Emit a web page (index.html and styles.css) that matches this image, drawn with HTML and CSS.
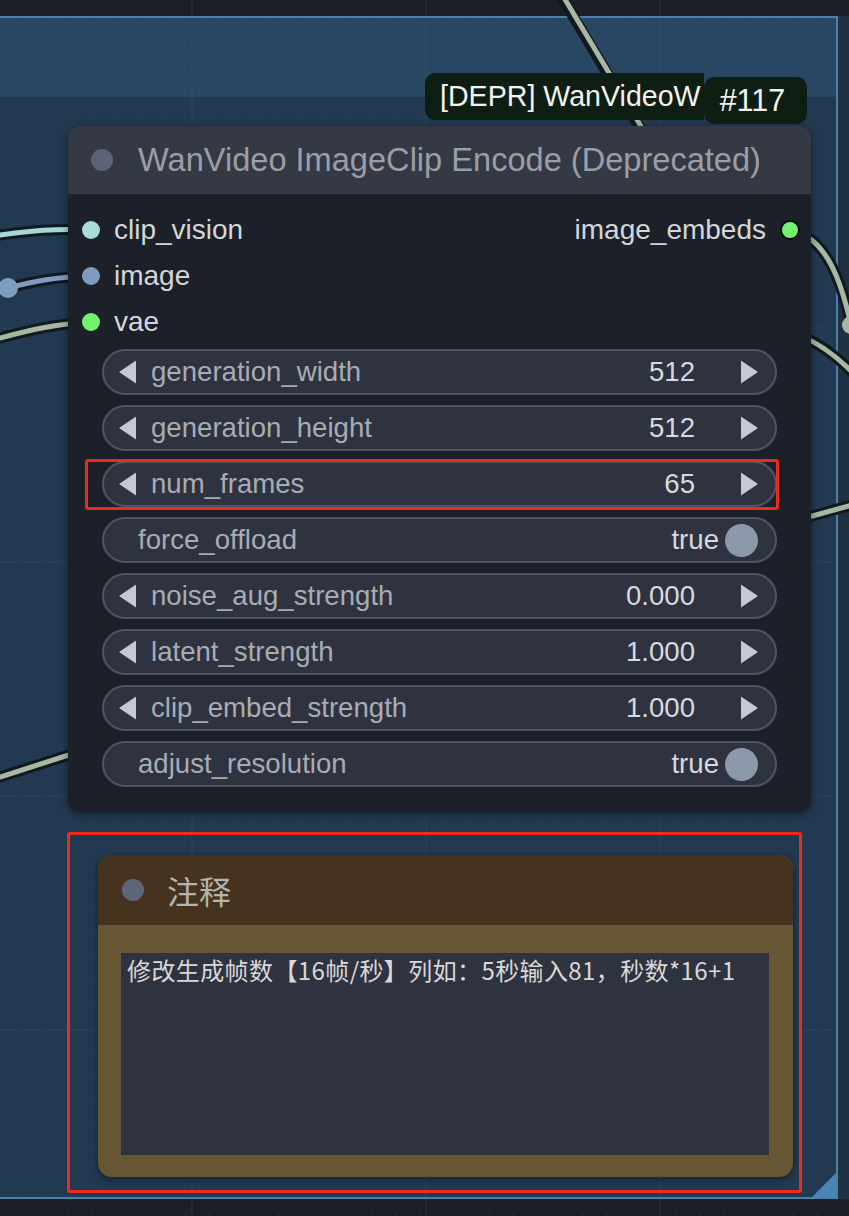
FILE: index.html
```html
<!DOCTYPE html>
<html lang="zh">

<head>
    <meta charset="UTF-8">
    <meta name="viewport" content="width=device-width, initial-scale=1.0">
    <title>WanVideo ImageClip Encode</title>
    <link rel="stylesheet" href="styles.css">
</head>

<body>
    <div class="canvas">
        <!-- 分组 -->
        <div class="group">
            <div class="group-title"></div>
            <span class="group-resize"></span>
        </div>

        <!-- 连线 -->
        <svg class="wires" width="849" height="1216" viewBox="0 0 849 1216">
            <g class="wire-shadow">
                <path d="M561,-4 L640,128" />
                <path d="M0,235 C30,231 55,228 91,230" />
                <path d="M8,288 C35,281 55,277 91,276" />
                <path d="M0,338 C30,330 55,324 91,322" />
                <path d="M0,777 L75,753" />
                <path d="M791,230 C828,238 842,285 851,325" />
                <path d="M800,336 C822,344 838,358 852,372" />
                <path d="M805,518 L852,505" />
            </g>
            <path class="wire grey" d="M563,-4 L642,128" />
            <path class="wire cyan" d="M0,235 C30,231 55,228 91,230" />
            <path class="wire blue" d="M8,288 C35,281 55,277 91,276" />
            <circle class="wire-dot blue" cx="8" cy="288" r="10" />
            <path class="wire grey" d="M0,338 C30,330 55,324 91,322" />
            <path class="wire grey" d="M0,777 L75,753" />
            <path class="wire grey" d="M791,230 C828,238 842,285 851,325" />
            <circle class="wire-dot grey" cx="851" cy="325" r="9" />
            <path class="wire grey" d="M800,336 C822,344 838,358 852,372" />
            <path class="wire grey" d="M805,518 L852,505" />
        </svg>

        <!-- 节点 -->
        <div class="node">
            <div class="node-title">
                <span class="title-dot"></span>
                <span class="title-text">WanVideo ImageClip Encode (Deprecated)</span>
            </div>
            <div class="node-body">
                <div class="slots">
                    <div class="slot-row">
                        <span class="slot"><i class="dot dot-clip"></i>clip_vision</span>
                        <span class="slot slot-out">image_embeds<i class="dot dot-out"></i></span>
                    </div>
                    <div class="slot-row">
                        <span class="slot"><i class="dot dot-image"></i>image</span>
                    </div>
                    <div class="slot-row">
                        <span class="slot"><i class="dot dot-vae"></i>vae</span>
                    </div>
                </div>
                <div class="widgets">
                    <div class="widget">
                        <span class="arrow arrow-left"></span>
                        <span class="w-label">generation_width</span>
                        <span class="w-value">512</span>
                        <span class="arrow arrow-right"></span>
                    </div>
                    <div class="widget">
                        <span class="arrow arrow-left"></span>
                        <span class="w-label">generation_height</span>
                        <span class="w-value">512</span>
                        <span class="arrow arrow-right"></span>
                    </div>
                    <div class="widget">
                        <span class="arrow arrow-left"></span>
                        <span class="w-label">num_frames</span>
                        <span class="w-value">65</span>
                        <span class="arrow arrow-right"></span>
                    </div>
                    <div class="widget toggle">
                        <span class="w-label">force_offload</span>
                        <span class="w-value">true</span>
                        <span class="knob"></span>
                    </div>
                    <div class="widget">
                        <span class="arrow arrow-left"></span>
                        <span class="w-label">noise_aug_strength</span>
                        <span class="w-value">0.000</span>
                        <span class="arrow arrow-right"></span>
                    </div>
                    <div class="widget">
                        <span class="arrow arrow-left"></span>
                        <span class="w-label">latent_strength</span>
                        <span class="w-value">1.000</span>
                        <span class="arrow arrow-right"></span>
                    </div>
                    <div class="widget">
                        <span class="arrow arrow-left"></span>
                        <span class="w-label">clip_embed_strength</span>
                        <span class="w-value">1.000</span>
                        <span class="arrow arrow-right"></span>
                    </div>
                    <div class="widget toggle">
                        <span class="w-label">adjust_resolution</span>
                        <span class="w-value">true</span>
                        <span class="knob"></span>
                    </div>
                </div>
            </div>
        </div>

        <!-- 节点标签 -->
        <div class="badge">
            <span class="badge-title">[DEPR] WanVideoW</span>
            <span class="badge-id">#117</span>
        </div>

        <!-- 注释节点 -->
        <div class="note">
            <div class="note-title">
                <span class="title-dot"></span>
                <span class="note-text">注释</span>
            </div>
            <div class="note-body">
                <div class="note-area">修改生成帧数【16帧/秒】列如：5秒输入81，秒数*16+1</div>
            </div>
        </div>

        <!-- 红框标记 -->
        <div class="mark mark-frames"></div>
        <div class="mark mark-note"></div>
    </div>
</body>

</html>
```

FILE: styles.css
```css
* {
    padding: 0;
    margin: 0;
    box-sizing: border-box;
}

body {
    width: 849px;
    height: 1216px;
    overflow: hidden;
    background: #1b1f26;
    font-family: "Liberation Sans", Arial, sans-serif;
}

.canvas {
    position: relative;
    width: 849px;
    height: 1216px;
    background-color: #1b1f26;
    background-image:
        linear-gradient(90deg, rgba(255, 255, 255, 0.045) 2px, transparent 2px),
        linear-gradient(0deg, rgba(255, 255, 255, 0.035) 2px, transparent 2px),
        radial-gradient(circle, rgba(255, 255, 255, 0.05) 1px, transparent 1.5px);
    background-size: 234px 234px, 234px 234px, 23.4px 23.4px;
    background-position: 191px 0, 0 95px, 10px 10px;
}

/* 分组 */
.group {
    position: absolute;
    left: -4px;
    top: 16px;
    width: 842px;
    height: 1183px;
    border: 2px solid #4a80aa;
    background: rgba(45, 95, 140, 0.42);
    box-shadow: 13px 0 0 0 #1f3244;
}

.group-title {
    height: 79px;
    background: rgba(70, 120, 160, 0.22);
}

.group-resize {
    position: absolute;
    right: 0;
    bottom: 0;
    width: 24px;
    height: 24px;
    background: #4a86b5;
    clip-path: polygon(100% 0, 100% 100%, 0 100%);
}

/* 连线 */
.wires {
    position: absolute;
    left: 0;
    top: 0;
    fill: none;
}

.wire-shadow path {
    stroke: #111820;
    stroke-width: 11;
    stroke-linecap: round;
}

.wire {
    stroke-width: 5;
    stroke-linecap: round;
}

.wire.cyan {
    stroke: #a3d8d6;
}

.wire.blue {
    stroke: #7f9dbf;
}

.wire.grey {
    stroke: #a6b7a2;
}

.wire-dot.blue {
    fill: #7f9dbf;
}

.wire-dot.grey {
    fill: #a6b7a2;
}

/* 节点 */
.node {
    position: absolute;
    left: 68px;
    top: 126px;
    width: 743px;
    height: 686px;
    border-radius: 12px;
    background: #1c2029;
    overflow: hidden;
    box-shadow: 0 2px 8px rgba(0, 0, 0, 0.45);
}

.node-title {
    height: 68px;
    display: flex;
    align-items: center;
    padding-left: 23px;
    background: #353944;
}

.title-dot {
    width: 22px;
    height: 22px;
    border-radius: 50%;
    background: #5c6274;
    flex-shrink: 0;
}

.title-text {
    margin-left: 25px;
    font-size: 32.6px;
    color: #9a9ea7;
    white-space: nowrap;
}

.node-body {
    padding: 13px 0 0;
}

.slot-row {
    height: 46px;
    display: flex;
    align-items: center;
    justify-content: space-between;
    padding: 0 11px 0 14px;
}

.slot {
    display: flex;
    align-items: center;
    gap: 14px;
    font-size: 28px;
    color: #d3d6da;
}

.dot {
    display: block;
    width: 18px;
    height: 18px;
    border-radius: 50%;
}

.dot-clip {
    background: #a8dcdc;
}

.dot-image {
    background: #7f9bbd;
}

.dot-vae {
    background: #72f26e;
}

.dot-out {
    width: 20px;
    height: 20px;
    background: #72f26e;
    border: 2px solid #0b0d10;
}

.widgets {
    display: flex;
    flex-direction: column;
    gap: 10px;
    margin: 4px 34px 0;
}

.widget {
    height: 46px;
    display: flex;
    align-items: center;
    padding: 0 17px 0 15px;
    border: 2px solid #4e5565;
    border-radius: 23px;
    background: #2f333f;
    font-size: 27.6px;
}

.arrow {
    width: 17px;
    height: 23px;
    background: #c5c9d1;
    flex-shrink: 0;
}

.arrow-left {
    clip-path: polygon(0 50%, 100% 0, 100% 100%);
    margin-right: 15px;
}

.arrow-right {
    clip-path: polygon(0 0, 100% 50%, 0 100%);
    margin-left: 46px;
}

.w-label {
    flex: 1;
    color: #a8acb5;
    white-space: nowrap;
}

.w-value {
    color: #d6d9dd;
}

.toggle {
    padding: 0 17px 0 34px;
}

.knob {
    width: 33px;
    height: 33px;
    margin-left: 6px;
    border-radius: 50%;
    background: #8c99aa;
}

/* 标签 */
.badge {
    position: absolute;
    left: 425px;
    top: 73px;
    display: flex;
    align-items: flex-start;
    z-index: 2;
}

.badge-title {
    height: 47px;
    padding: 0 3px 0 15px;
    line-height: 47px;
    white-space: nowrap;
    background: #0f1e12;
    border-radius: 10px 0 0 10px;
    font-size: 28.6px;
    color: #f2f2f2;
}

.badge-id {
    height: 47px;
    margin-top: 4px;
    padding: 0 22px 0 16px;
    line-height: 47px;
    background: #0f1e12;
    border-radius: 10px;
    font-size: 30.5px;
    color: #f2f2f2;
}

/* 注释 */
.note {
    position: absolute;
    left: 98px;
    top: 855px;
    width: 695px;
    height: 322px;
    border-radius: 14px;
    overflow: hidden;
    background: #675634;
    box-shadow: 0 2px 8px rgba(0, 0, 0, 0.45);
}

.note-title {
    height: 70px;
    display: flex;
    align-items: center;
    padding-left: 24px;
    background: #46331f;
}

.note-title .title-dot {
    background: #5d6679;
}

.note-text {
    margin-left: 23px;
    font-family: "Noto Sans CJK SC", sans-serif;
    font-size: 32px;
    color: #b6b4ae;
}

.note-body {
    padding: 28px 24px 22px 23px;
}

.note-area {
    height: 202px;
    padding: 0 6px;
    background: #2f333f;
    font-family: "Noto Sans CJK SC", sans-serif;
    font-size: 24px;
    line-height: 34px;
    letter-spacing: 0.4px;
    color: #d8d8d8;
}

/* 红框 */
.mark {
    position: absolute;
    border: 3px solid #ec2a1e;
    border-radius: 3px;
    z-index: 3;
}

.mark-frames {
    left: 85px;
    top: 459px;
    width: 694px;
    height: 51px;
}

.mark-note {
    left: 67px;
    top: 832px;
    width: 735px;
    height: 361px;
}
```
